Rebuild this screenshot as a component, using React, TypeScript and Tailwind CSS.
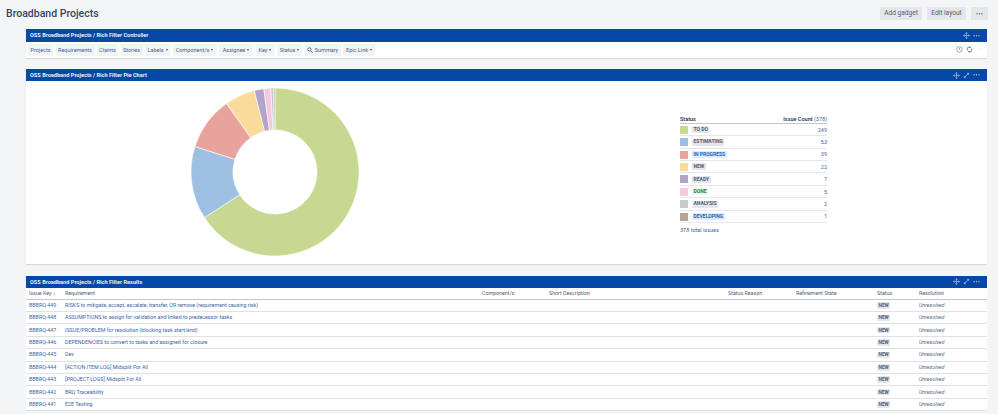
import React from "react";

const font = { fontFamily: 'Roboto, "Noto Sans", sans-serif' };

const Move = () => (
  <svg viewBox="0 0 16 16" className="w-[7px] h-[7px]" fill="none" stroke="#a9c3ec" strokeWidth="1.5">
    <path d="M8 1v14M1 8h14M5.5 3.5L8 1l2.5 2.5M5.5 12.5L8 15l2.5-2.5M3.5 5.5L1 8l2.5 2.5M12.5 5.5L15 8l-2.5 2.5" />
  </svg>
);
const Expand = () => (
  <svg viewBox="0 0 16 16" className="w-[7px] h-[7px]" fill="none" stroke="#a9c3ec" strokeWidth="1.6">
    <path d="M3 13L13 3M9 3h4v4M3 9v4h4" />
  </svg>
);
const Dots = ({ c = "#a9c3ec" }: { c?: string }) => (
  <svg viewBox="0 0 16 8" className="w-[7px] h-[3.5px]" fill={c}>
    <circle cx="2.5" cy="4" r="1.5" /><circle cx="8" cy="4" r="1.5" /><circle cx="13.5" cy="4" r="1.5" />
  </svg>
);

function Header({ title, expand = true }: { title: string; expand?: boolean }) {
  return (
    <div className="h-[12.4px] bg-[#0747a6] flex items-center justify-between pl-[4px] pr-[7px]">
      <span className="text-[5.6px] font-bold text-[#e6eefa]">{title}</span>
      <span className="flex items-center gap-[3px]">
        <Move />
        {expand && <Expand />}
        <Dots />
      </span>
    </div>
  );
}

const Caret = () => <span className="inline-block ml-[2px] border-x-[1.5px] border-x-transparent border-t-[2px] border-t-[#42526e] align-middle" />;

const tools: [string, number, boolean, boolean][] = [
  ["Projects", 25, false, true],
  ["Requirements", 39, false, true],
  ["Claims", 21, false, true],
  ["Stories", 22, false, true],
  ["Labels", 25, true, false],
  ["Component/s", 44, true, false],
  ["Assignee", 34, true, false],
  ["Key", 19, true, false],
  ["Status", 25, true, false],
];

function Tool({ label, w, caret, blue }: { label: string; w: number; caret: boolean; blue: boolean }) {
  return (
    <span
      style={{ width: w }}
      className={`h-[12px] bg-[#f1f3f5] rounded-[1px] flex items-center justify-center text-[5.5px] ${blue ? "text-[#3a66a8]" : "text-[#505f79]"}`}
    >
      {label}
      {caret && <Caret />}
    </span>
  );
}

const R = 84, r = 42, cx = 85, cy = 85;
const slices: [number, string][] = [
  [249, "#c7d991"],
  [53, "#9dbfe2"],
  [39, "#e8a49c"],
  [22, "#fbdb9c"],
  [7, "#b0a4c8"],
  [5, "#f6c8de"],
  [2, "#c9c9c9"],
  [1, "#b8a497"],
];
function arcs() {
  let a = 0;
  return slices.map(([v, c]) => {
    const s = (a / 378) * 2 * Math.PI;
    a += v;
    const e = (a / 378) * 2 * Math.PI;
    const p = (rad: number, t: number) => `${(cx + rad * Math.sin(t)).toFixed(2)} ${(cy - rad * Math.cos(t)).toFixed(2)}`;
    const large = e - s > Math.PI ? 1 : 0;
    const d = `M${p(R, s)}A${R} ${R} 0 ${large} 1 ${p(R, e)}L${p(r, e)}A${r} ${r} 0 ${large} 0 ${p(r, s)}Z`;
    return <path key={c} d={d} fill={c} stroke="#fff" strokeWidth="0.6" />;
  });
}

const legend: [string, string, string, number][] = [
  ["TO DO", "#c7d991", "g", 249],
  ["ESTIMATING", "#9dbfe2", "g", 53],
  ["IN PROGRESS", "#e8a49c", "b", 39],
  ["NEW", "#fbdb9c", "g", 22],
  ["READY", "#b0a4c8", "g", 7],
  ["DONE", "#f6c8de", "d", 5],
  ["ANALYSIS", "#c9c9c9", "g", 2],
  ["DEVELOPING", "#b8a497", "b", 1],
];

const lozenge: Record<string, string> = {
  g: "bg-[#e4e6ea] text-[#505f79]",
  b: "bg-[#deebff] text-[#2a5fb0]",
  d: "bg-[#e3fcef] text-[#1f7a57]",
};

const rows: [string, string][] = [
  ["BBBRQ-449", "RISKS to mitigate, accept, escalate, transfer, OR remove (requirement causing risk)"],
  ["BBBRQ-448", "ASSUMPTIONS to assign for validation and linked to predecessor tasks"],
  ["BBBRQ-447", "ISSUE/PROBLEM for resolution (blocking task start/end)"],
  ["BBBRQ-446", "DEPENDENCIES to convert to tasks and assigned for closure"],
  ["BBBRQ-445", "Dev"],
  ["BBBRQ-444", "[ACTION ITEM LOG] Midsplit For All"],
  ["BBBRQ-443", "[PROJECT LOGS] Midsplit For All"],
  ["BBBRQ-442", "BRQ Traceability"],
  ["BBBRQ-441", "E2E Testing"],
];

const grid = "grid grid-cols-[36px_417px_67px_179px_68px_81px_42px_1fr] items-center px-[3px] pt-[1px]";

export default function App() {
  return (
    <div style={font} className="w-[998px] h-[414px] overflow-hidden bg-[#f4f5f7]">
      <div className="h-[29.3px] flex items-start justify-between pl-[6px] pr-[10px]">
        <h1 className="text-[10.5px] leading-[14px] mt-[6.5px] font-medium text-[#344563]">Broadband Projects</h1>
        <div className="flex gap-[5px] mt-[7px] text-[6.6px] text-[#505f79]">
          <span className="w-[42px] h-[13px] bg-[#e4e6ea] rounded-[1px] flex items-center justify-center">Add gadget</span>
          <span className="w-[39px] h-[13px] bg-[#e4e6ea] rounded-[1px] flex items-center justify-center">Edit layout</span>
          <span className="w-[17px] h-[13px] bg-[#e4e6ea] rounded-[1px] flex items-center justify-center"><Dots c="#505f79" /></span>
        </div>
      </div>

      <div className="ml-[26px] w-[960.5px]">
        <section className="shadow-[0_1px_1px_rgba(9,30,66,0.12)]">
          <Header title="OSS Broadband Projects / Rich Filter Controller" expand={false} />
          <div className="h-[16.3px] bg-white flex items-center justify-between pl-[2px] pr-[4px]">
            <div className="flex gap-[2.5px]">
              {tools.map(([l, w, c, b]) => <Tool key={l} label={l} w={w} caret={c} blue={b} />)}
              <span className="w-[36px] h-[12px] bg-[#f1f3f5] flex items-center justify-center gap-[2px] text-[5.5px] text-[#505f79]">
                <svg viewBox="0 0 16 16" className="w-[6px] h-[6px]" fill="none" stroke="#42526e" strokeWidth="2"><circle cx="6.5" cy="6.5" r="4.5" /><path d="M10 10l5 5" /></svg>
                Summary
              </span>
              <Tool label="Epic Link" w={32} caret blue={false} />
            </div>
            <div className="flex items-center gap-[3px]">
              <svg viewBox="0 0 16 16" className="w-[7px] h-[7px]" fill="none" stroke="#6b778c" strokeWidth="1.4"><circle cx="8" cy="8" r="6.5" /><path d="M8 4v4l3 2" /></svg>
              <svg viewBox="0 0 16 16" className="w-[7px] h-[7px]" fill="none" stroke="#42526e" strokeWidth="1.6"><path d="M3 10V6a3 3 0 0 1 3-3h4M13 6v4a3 3 0 0 1-3 3H6M8 1l2 2-2 2M8 11l-2 2 2 2" /></svg>
              <svg viewBox="0 0 16 16" className="w-[7px] h-[7px]" fill="none" stroke="#e4e6ea" strokeWidth="1.6"><path d="M5 6l3 3 3-3" /></svg>
            </div>
          </div>
        </section>

        <section className="mt-[11px] shadow-[0_1px_1px_rgba(9,30,66,0.12)]">
          <Header title="OSS Broadband Projects / Rich Filter Pie Chart" />
          <div className="h-[182.6px] bg-white flex">
            <div className="w-[654px] pt-[6px] pl-[163.5px]">
              <svg viewBox="0 0 170 170" className="w-[170px] h-[170px]">{arcs()}</svg>
            </div>
            <div className="w-[147px] pt-[33.5px] text-[5.5px] text-[#172b4d]">
              <div className="h-[9px] flex items-center justify-between border-b border-b-[#c1c7d0]">
                <span className="font-medium">Status</span>
                <span><span className="font-medium">Issue Count</span> <span className="text-[#3a66a8]">(378)</span></span>
              </div>
              {legend.map(([n, c, k, v]) => (
                <div key={n} className="h-[12.4px] pt-[0.5px] flex items-center border-b border-b-[#e4e7eb]">
                  <span style={{ backgroundColor: c }} className="w-[8px] h-[8px] mr-[4px]" />
                  <span className={`h-[7px] flex items-center px-[1.5px] rounded-[1px] text-[5px] font-bold ${lozenge[k]}`}>{n}</span>
                  <span className="ml-auto text-[#3a66a8]">{v}</span>
                </div>
              ))}
              <div className="mt-[3px] text-[#3a66a8]">378 total issues</div>
            </div>
          </div>
        </section>

        <section className="mt-[11.7px]">
          <Header title="OSS Broadband Projects / Rich Filter Results" />
          <div className="bg-white text-[5.3px] text-[#505f79]">
            <div className={`${grid} h-[11.5px] border-b border-b-[#c1c7d0]`}>
              <span>Issue Key <span className="font-bold text-[#253858]">↓</span></span>
              <span>Requirement</span>
              <span>Component/s</span>
              <span>Short Description</span>
              <span>Status Reason</span>
              <span>Refinement State</span>
              <span>Status</span>
              <span>Resolution</span>
            </div>
            {rows.map(([k, t]) => (
              <div key={k} className={`${grid} h-[12.4px] border-b border-b-[#dfe1e6]`}>
                <span className="text-[#3a66a8]">{k}</span>
                <span className="text-[#3a66a8]">{t}</span>
                <span />
                <span />
                <span />
                <span />
                <span><span className="inline-flex items-center h-[6.5px] px-[1.5px] bg-[#e4e6ea] rounded-[1px] text-[4.8px] font-bold text-[#505f79]">NEW</span></span>
                <span className="italic">Unresolved</span>
              </div>
            ))}
          </div>
        </section>
      </div>
    </div>
  );
}
